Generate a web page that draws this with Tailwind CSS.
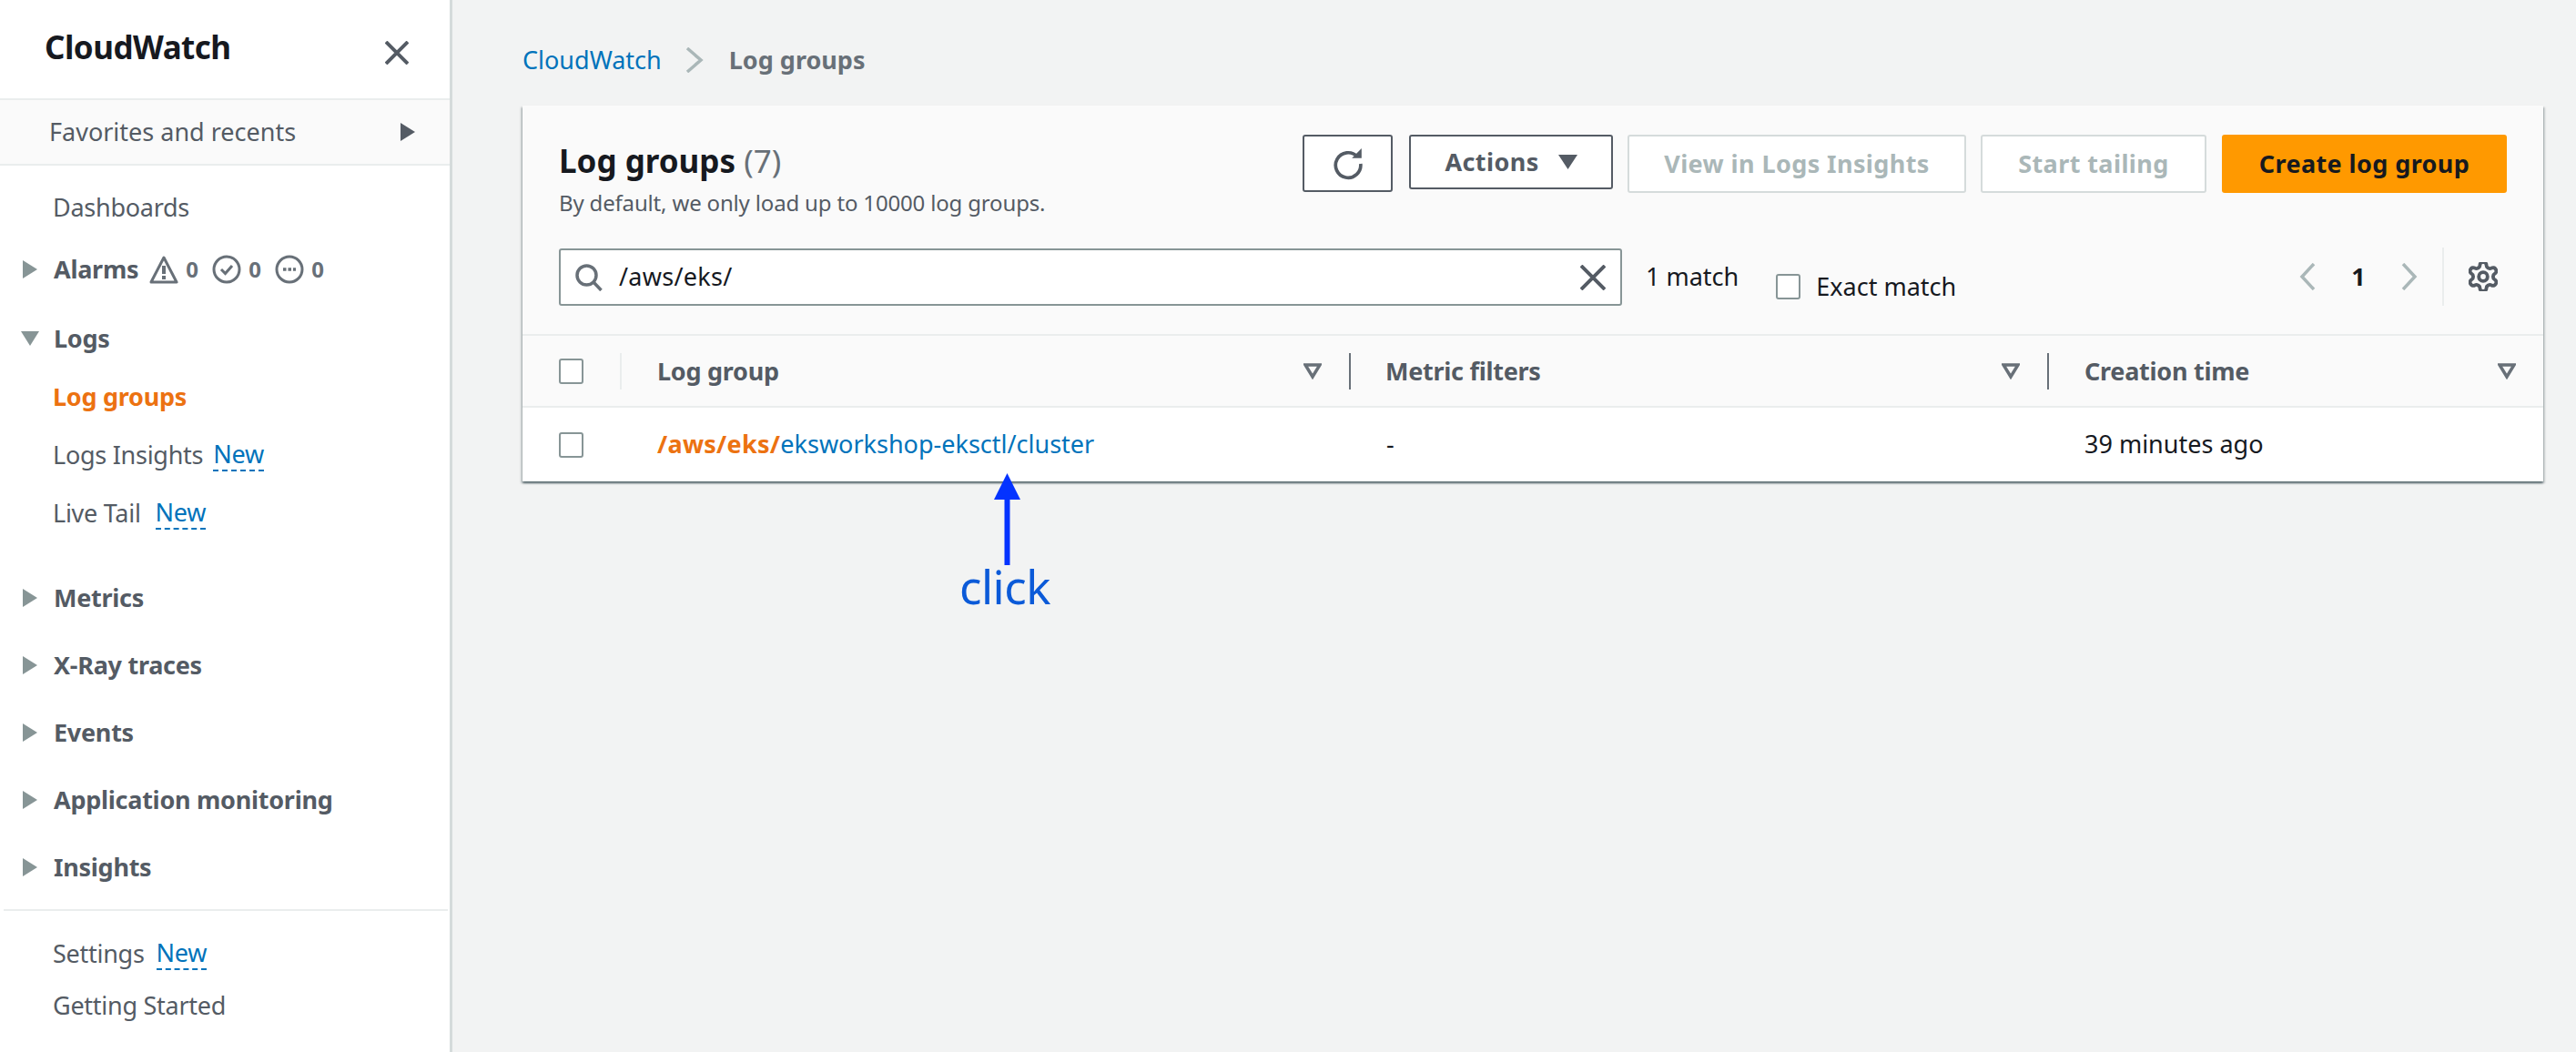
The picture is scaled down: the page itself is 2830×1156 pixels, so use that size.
<!DOCTYPE html>
<html>
<head>
<meta charset="utf-8">
<script src="https://cdn.jsdelivr.net/npm/@tailwindcss/browser@4"></script>
</head>
<body class="m-0">
<div class="relative flex w-[2830px] h-[1156px] overflow-hidden bg-[#f2f3f3] font-['Noto_Sans',sans-serif] text-[27px] tracking-[-0.01em] text-[#545b64]">
  <aside class="w-[497px] shrink-0 h-full bg-white border-r-[3px] border-[#d5dbdb] flex flex-col">
    <div class="h-[110px] shrink-0 border-b-2 border-[#eaeded] flex items-start justify-between pl-[49px] pr-[45px]">
      <span class="mt-[28px] h-[48px] leading-[48px] text-[35px] font-bold tracking-[-0.015em] text-[#16191f]">CloudWatch</span>
      <svg class="mt-[45px]" width="26" height="26" viewBox="0 0 26 26"><path d="M1 1L25 25M25 1L1 25" stroke="#545b64" stroke-width="4" fill="none"/></svg>
    </div>
    <div class="h-[72px] shrink-0 bg-[#fafafa] border-b-2 border-[#eaeded] flex items-center justify-between pl-[54px] pr-[38px]">
      <span class="tracking-normal">Favorites and recents</span>
      <svg width="16" height="20" viewBox="0 0 16 20"><path d="M0 0L16 10L0 20Z" fill="#545b64"/></svg>
    </div>
    <nav class="flex flex-col pl-[25px]">
      <div class="mt-[26px] h-10 flex items-center pl-[33px]">Dashboards</div>
      <div class="mt-[28px] h-10 flex items-center">
        <svg class="shrink-0" width="16" height="20" viewBox="0 0 16 20"><path d="M0 0L16 10L0 20Z" fill="#879596"/></svg>
        <span class="ml-[18px] font-bold">Alarms</span>
        <span class="ml-[12px] flex items-center gap-[8px] text-[24px] font-bold text-[#687078]">
          <svg width="32" height="32" viewBox="0 0 32 32"><path d="M16 3L30 30H2Z" fill="none" stroke="#687078" stroke-width="3" stroke-linejoin="round"/><path d="M16 12V21M16 23V27" stroke="#687078" stroke-width="4"/></svg>
          <span class="w-[21px]">0</span>
        </span>
        <span class="ml-[8px] flex items-center gap-[8px] text-[24px] font-bold text-[#687078]">
          <svg width="32" height="32" viewBox="0 0 32 32"><circle cx="16" cy="16" r="14" fill="none" stroke="#687078" stroke-width="3"/><path d="M10 16L14.500 20.500L22 12" fill="none" stroke="#687078" stroke-width="3"/></svg>
          <span class="w-[21px]">0</span>
        </span>
        <span class="ml-[8px] flex items-center gap-[8px] text-[24px] font-bold text-[#687078]">
          <svg width="32" height="32" viewBox="0 0 32 32"><circle cx="16" cy="16" r="14" fill="none" stroke="#687078" stroke-width="3"/><path d="M9 16H23" fill="none" stroke="#687078" stroke-width="3.500" stroke-dasharray="3.500 2"/></svg>
          <span class="w-[21px]">0</span>
        </span>
      </div>
      <div class="mt-[36px] h-10 flex items-center">
        <svg class="-ml-[2px] shrink-0" width="20" height="16" viewBox="0 0 20 16"><path d="M0 0H20L10 16Z" fill="#879596"/></svg>
        <span class="ml-[16px] font-bold">Logs</span>
      </div>
      <div class="mt-[24px] h-10 flex items-center pl-[33px] font-bold text-[#ec7211]">Log groups</div>
      <div class="mt-[24px] h-10 flex items-center pl-[33px]">Logs Insights<span class="ml-[11px] text-[#0073bb] border-b-2 border-dashed border-[#0073bb] leading-[34px]">New</span></div>
      <div class="mt-[24px] h-10 flex items-center pl-[33px]">Live Tail<span class="ml-[16px] text-[#0073bb] border-b-2 border-dashed border-[#0073bb] leading-[34px]">New</span></div>
      <div class="mt-[53px] flex flex-col gap-[34px]">
        <div class="h-10 flex items-center"><svg width="16" height="20" viewBox="0 0 16 20"><path d="M0 0L16 10L0 20Z" fill="#879596"/></svg><span class="ml-[18px] font-bold">Metrics</span></div>
        <div class="h-10 flex items-center"><svg width="16" height="20" viewBox="0 0 16 20"><path d="M0 0L16 10L0 20Z" fill="#879596"/></svg><span class="ml-[18px] font-bold">X-Ray traces</span></div>
        <div class="h-10 flex items-center"><svg width="16" height="20" viewBox="0 0 16 20"><path d="M0 0L16 10L0 20Z" fill="#879596"/></svg><span class="ml-[18px] font-bold">Events</span></div>
        <div class="h-10 flex items-center"><svg width="16" height="20" viewBox="0 0 16 20"><path d="M0 0L16 10L0 20Z" fill="#879596"/></svg><span class="ml-[18px] font-bold">Application monitoring</span></div>
        <div class="h-10 flex items-center"><svg width="16" height="20" viewBox="0 0 16 20"><path d="M0 0L16 10L0 20Z" fill="#879596"/></svg><span class="ml-[18px] font-bold">Insights</span></div>
      </div>
    </nav>
    <div class="mt-[26px] ml-[4px] mr-[2px] h-[2px] bg-[#eaeded]"></div>
    <div class="mt-[27px] h-10 flex items-center pl-[58px]">Settings<span class="ml-[13px] text-[#0073bb] border-b-2 border-dashed border-[#0073bb] leading-[34px]">New</span></div>
    <div class="mt-[17px] h-10 flex items-center pl-[58px]">Getting Started</div>
  </aside>

  <main class="flex-1 min-w-0 pl-[77px] pr-[36px] tracking-normal">
    <div class="mt-[46px] h-10 flex items-center">
      <span class="text-[#0073bb]">CloudWatch</span>
      <svg class="ml-[26px]" width="20" height="28" viewBox="0 0 20 28"><path d="M2 1L17 14L2 27" fill="none" stroke="#aab7b8" stroke-width="3.500"/></svg>
      <span class="ml-[28px] font-bold text-[#687078]">Log groups</span>
    </div>
    <section class="mt-[30px] h-[413px] bg-white shadow-[0_2px_2px_0_rgba(0,28,36,0.5),2px_2px_2px_0_rgba(0,28,36,0.15),-2px_2px_2px_0_rgba(0,28,36,0.15)]">
      <div class="h-[253px] bg-[#fafafa] pt-[32px] pl-[40px] pr-[40px] border-b-2 border-[#eaeded]">
        <div class="h-[125px] flex justify-between items-start">
          <div>
            <h1 class="mt-[6px] h-[46px] leading-[46px] text-[35px] font-bold text-[#16191f]">Log groups <span class="font-normal text-[#687078]">(7)</span></h1>
            <p class="mt-[3px] h-[40px] leading-[40px] text-[24px] tracking-[-0.007em] text-[#545b64]">By default, we only load up to 10000 log groups.</p>
          </div>
          <div class="flex items-start font-bold tracking-[0.015em]">
            <button class="w-[99px] h-[63px] bg-white border-2 border-[#545b64] rounded-[3px] flex items-center justify-center">
              <svg width="36" height="36" viewBox="0 0 34 34"><path d="M26.500 9.500A13 13 0 1 0 30 17" fill="none" stroke="#545b64" stroke-width="3.500"/><path d="M21 11H31V1Z" fill="#545b64"/></svg>
            </button>
            <button class="ml-[18px] w-[224px] h-[60px] bg-white border-2 border-[#545b64] rounded-[3px] flex items-center justify-center gap-[21px]">
              <span>Actions</span>
              <svg width="21" height="16" viewBox="0 0 21 16"><path d="M0 0H21L10.500 16Z" fill="#545b64"/></svg>
            </button>
            <button class="ml-[16px] w-[372px] h-[64px] bg-white border-2 border-[#d5dbdb] rounded-[3px] text-[#aab7b8]">View in Logs Insights</button>
            <button class="ml-[16px] w-[248px] h-[64px] bg-white border-2 border-[#d5dbdb] rounded-[3px] text-[#aab7b8]">Start tailing</button>
            <button class="ml-[17px] w-[313px] h-[64px] bg-[#ff9900] rounded-[3px] text-[#16191f]">Create log group</button>
          </div>
        </div>
        <div class="flex items-start">
          <div class="w-[1168px] h-[63px] bg-white border-2 border-[#879596] rounded-[3px] flex items-center pl-[16px] pr-[16px] text-[#16191f]">
            <svg width="30" height="30" viewBox="0 0 30 30"><circle cx="12.500" cy="12.500" r="10.500" fill="none" stroke="#687078" stroke-width="3.500"/><path d="M20 20L28.500 29" stroke="#687078" stroke-width="3.500"/></svg>
            <span class="ml-[18px] tracking-[0.01em]">/aws/eks/</span>
            <svg class="ml-auto" width="28" height="28" viewBox="0 0 28 28"><path d="M1 1L27 27M27 1L1 27" stroke="#545b64" stroke-width="4"/></svg>
          </div>
          <span class="ml-[26px] h-[63px] leading-[62px] text-[#16191f]">1 match</span>
          <span class="ml-[41px] mt-[28px] w-[27px] h-[28px] bg-white border-2 border-[#879596] rounded-[3px]"></span>
          <span class="ml-[17px] mt-[22px] h-10 leading-10 text-[#16191f]">Exact match</span>
          <div class="ml-auto mr-[10px] h-[64px] flex items-center -mt-[1px]">
            <svg width="18" height="30" viewBox="0 0 18 30"><path d="M16 1L3 15L16 29" fill="none" stroke="#aab7b8" stroke-width="3.500"/></svg>
            <span class="w-[94px] text-center font-bold text-[#16191f]">1</span>
            <svg width="18" height="30" viewBox="0 0 18 30"><path d="M2 1L15 15L2 29" fill="none" stroke="#aab7b8" stroke-width="3.500"/></svg>
            <span class="ml-[27px] w-[2px] h-[64px] bg-[#eaeded]"></span>
            <svg class="ml-[27px]" width="32" height="32" viewBox="2 2 20 20"><path d="M12.220 2h-.44a2 2 0 0 0-2 2v.18a2 2 0 0 1-1 1.730l-.43.25a2 2 0 0 1-2 0l-.15-.08a2 2 0 0 0-2.730.73l-.22.38a2 2 0 0 0 .73 2.730l.15.1a2 2 0 0 1 1 1.720v.51a2 2 0 0 1-1 1.740l-.15.09a2 2 0 0 0-.73 2.730l.22.38a2 2 0 0 0 2.730.73l.15-.08a2 2 0 0 1 2 0l.43.25a2 2 0 0 1 1 1.730V20a2 2 0 0 0 2 2h.44a2 2 0 0 0 2-2v-.18a2 2 0 0 1 1-1.730l.43-.25a2 2 0 0 1 2 0l.15.08a2 2 0 0 0 2.730-.73l.22-.39a2 2 0 0 0-.73-2.730l-.15-.08a2 2 0 0 1-1-1.740v-.5a2 2 0 0 1 1-1.740l.15-.09a2 2 0 0 0 .73-2.730l-.22-.38a2 2 0 0 0-2.730-.73l-.15.08a2 2 0 0 1-2 0l-.43-.25a2 2 0 0 1-1-1.730V4a2 2 0 0 0-2-2z" fill="none" stroke="#545b64" stroke-width="2.400"/><circle cx="12" cy="12" r="3" fill="none" stroke="#545b64" stroke-width="2.400"/></svg>
          </div>
        </div>
      </div>
      <div class="h-[79px] bg-[#fafafa] border-b-2 border-[#eaeded] flex items-center font-bold tracking-[-0.01em]">
        <div class="w-[107px] pl-[40px]"><span class="block w-[27px] h-[28px] bg-white border-2 border-[#879596] rounded-[3px]"></span></div>
        <div class="w-[801px] h-10 border-l-2 border-[#eaeded] pl-[39px] pr-[30px] flex items-center justify-between"><span class="mt-[2px]">Log group</span><svg width="20" height="18" viewBox="0 0 20 18"><path d="M2 2H18L10 15Z" fill="none" stroke="#687078" stroke-width="3.500"/></svg></div>
        <div class="w-[767px] h-10 border-l-2 border-[#687078] pl-[38px] pr-[30px] flex items-center justify-between"><span class="mt-[2px]">Metric filters</span><svg width="20" height="18" viewBox="0 0 20 18"><path d="M2 2H18L10 15Z" fill="none" stroke="#687078" stroke-width="3.500"/></svg></div>
        <div class="flex-1 h-10 border-l-2 border-[#687078] pl-[39px] pr-[30px] flex items-center justify-between"><span class="mt-[2px]">Creation time</span><svg width="20" height="18" viewBox="0 0 20 18"><path d="M2 2H18L10 15Z" fill="none" stroke="#687078" stroke-width="3.500"/></svg></div>
      </div>
      <div class="h-[81px] flex items-center text-[#16191f]">
        <div class="w-[107px] pl-[40px]"><span class="block w-[27px] h-[28px] bg-white border-2 border-[#879596] rounded-[3px]"></span></div>
        <div class="w-[801px] pl-[41px]"><span class="font-bold tracking-[0.01em] text-[#ec7211]">/aws/eks/</span><span class="text-[#0073bb]">eksworkshop-eksctl/cluster</span></div>
        <div class="w-[767px] pl-[41px]">-</div>
        <div class="flex-1 pl-[41px]">39 minutes ago</div>
      </div>
    </section>
  </main>

  <svg class="absolute left-[1092px] top-[520px]" width="29" height="101" viewBox="0 0 29 101"><path d="M14.500 0L29 29H17.500V101H11.500V29H0Z" fill="#0433ff"/></svg>
  <span class="absolute left-[1054px] top-[611px] leading-[66px] text-[51px] tracking-[-0.01em] text-[#0b5ad8]">click</span>
</div>
</body>
</html>
